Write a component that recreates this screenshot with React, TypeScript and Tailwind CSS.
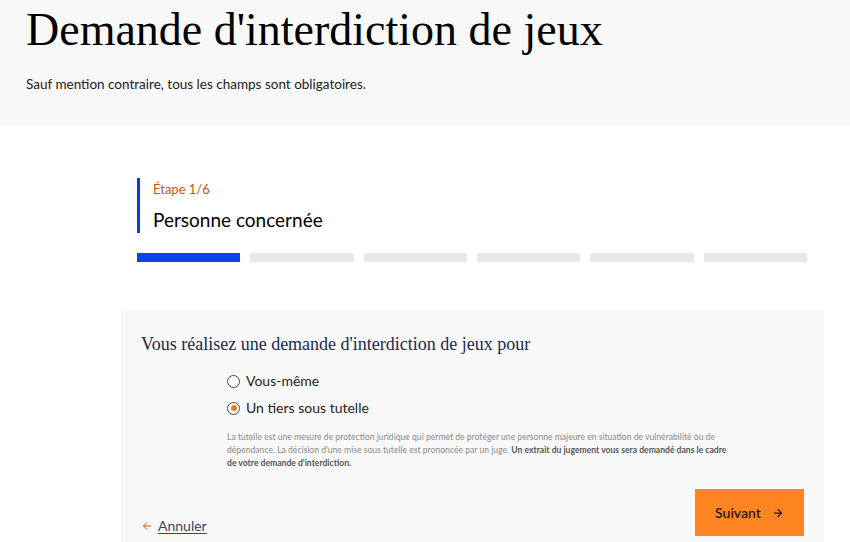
import { ArrowLeft, ArrowRight } from "lucide-react"

const STEPS = 6
const CURRENT = 1

export default function App() {
    return (
        <div className="min-h-[542px] bg-white font-['Lato','Noto_Sans',sans-serif] text-[#1a1a1a]">
            {/* En-tête */}
            <header className="h-[126px] bg-[#f8f8f8] px-[26px] pt-[2px]">
                <h1 className="font-['Liberation_Serif',serif] text-[46px] leading-[56px] text-black">
                    Demande d'interdiction de jeux
                </h1>
                <p className="mt-[16px] text-[13.5px] leading-[20px] text-[#222]">
                    Sauf mention contraire, tous les champs sont obligatoires.
                </p>
            </header>

            {/* Étape */}
            <section className="mx-[137px] mt-[52px] w-[670px]">
                <div className="border-l-[3px] border-[#0b3fd9] pl-[13px]">
                    <p className="text-[13px] leading-[22px] text-[#c25a12]">Étape 1/6</p>
                    <p className="mt-[6px] text-[19px] leading-[27px] text-black">Personne concernée</p>
                </div>
                <div className="mt-[20px] flex gap-[10px]">
                    {Array.from({ length: STEPS }).map((_, i) => (
                        <div
                            key={i}
                            className={`h-[9px] flex-1 ${i < CURRENT ? "bg-[#0448ee]" : "bg-[#e8e8e8]"}`}
                        />
                    ))}
                </div>
            </section>

            {/* Formulaire */}
            <section className="ml-[121px] mt-[47px] w-[703px] bg-[#f9f9f9] px-[20px] pt-[22px] pb-[6px]">
                <h2 className="font-['Liberation_Serif',serif] text-[18px] leading-[26px] text-[#1c2a4f]">
                    Vous réalisez une demande d'interdiction de jeux pour
                </h2>

                <div className="ml-[86px] mt-[14px] flex flex-col gap-[7px]">
                    <label className="flex items-center gap-[6px] text-[14px] leading-[20px] text-[#222]">
                        <span className="h-[13px] w-[13px] rounded-full border border-[#3a4a78] bg-white" />
                        Vous-même
                    </label>
                    <label className="flex items-center gap-[6px] text-[14px] leading-[20px] text-[#222]">
                        <span className="flex h-[13px] w-[13px] items-center justify-center rounded-full border border-[#3a4a78] bg-white">
                            <span className="h-[6px] w-[6px] rounded-full bg-[#f07c22]" />
                        </span>
                        Un tiers sous tutelle
                    </label>
                    <p className="mt-[6px] w-[502px] text-[8.6px] leading-[13px] text-[#8a8a8a]">
                        La tutelle est une mesure de protection juridique qui permet de protéger une personne majeure en situation de vulnérabilité ou de dépendance. La décision d'une mise sous tutelle est prononcée par un juge.{" "}
                        <strong className="font-bold text-[#555]">
                            Un extrait du jugement vous sera demandé dans le cadre de votre demande d'interdiction.
                        </strong>
                    </p>
                </div>

                <div className="mt-[19px] flex items-end justify-between">
                    <a href="#" className="flex items-center gap-[5px] text-[14px] text-[#3a4668]">
                        <ArrowLeft className="h-[12px] w-[12px] text-[#c25a12]" strokeWidth={2} />
                        <span className="underline underline-offset-2">Annuler</span>
                    </a>
                    <button className="flex h-[47px] w-[109px] items-center justify-center gap-[11px] bg-[#ff8422] text-[14px] font-semibold text-[#2a1a10]">
                        Suivant
                        <ArrowRight className="h-[12px] w-[12px]" strokeWidth={2.5} />
                    </button>
                </div>
            </section>
        </div>
    )
}
